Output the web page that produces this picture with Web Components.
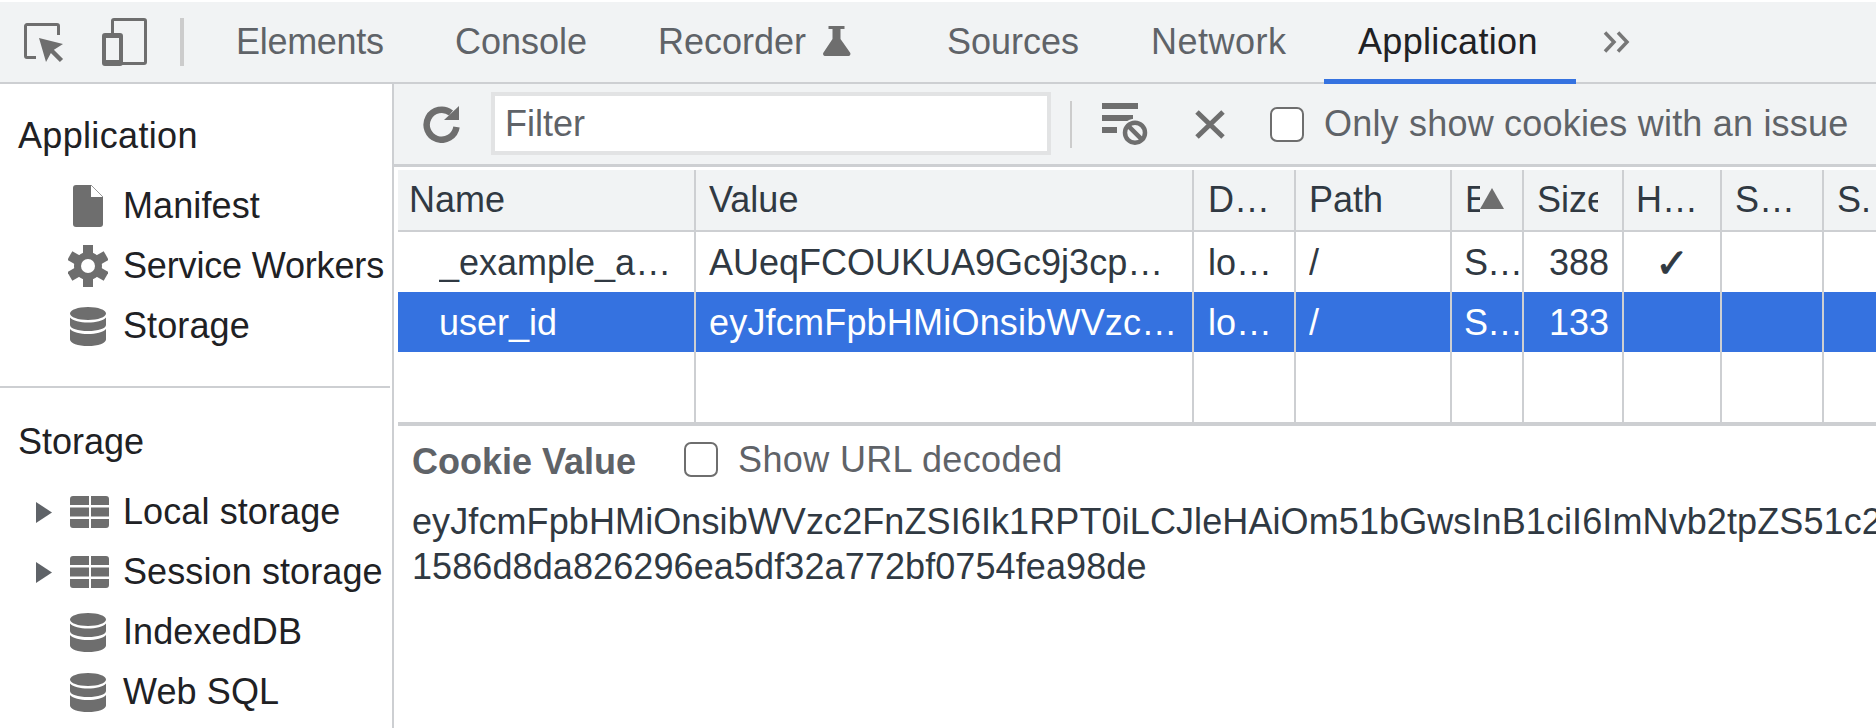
<!DOCTYPE html>
<html lang="en">
<head>
<meta charset="utf-8">
<title>DevTools - Application</title>
<style>
  html, body { margin: 0; height: 100%; background: #fff; overflow: hidden; }
  body { font: 36px "Liberation Sans", Arial, sans-serif; color: #202124; }
</style>
</head>
<body>
<dt-app></dt-app>
<script>
const ICONS = {
  inspect: `<svg width="40" height="40" viewBox="0 0 40 40"><path d="M12 34.500H3A1.500 1.500 0 0 1 1.500 33V3A1.500 1.500 0 0 1 3 1.500h30A1.500 1.500 0 0 1 34.500 3v9" fill="none" stroke="#6e6e6e" stroke-width="3"/><path d="M15 15l24 6-11 7-6 11z" fill="#6e6e6e"/><path d="M27 27l10.500 10.500" stroke="#6e6e6e" stroke-width="4.500"/></svg>`,
  device: `<svg width="45" height="48" viewBox="0 0 45 48"><path d="M10.500 15V3A1.500 1.500 0 0 1 12 1.500h30A1.500 1.500 0 0 1 43.500 3v41a1.500 1.500 0 0 1-1.500 1.500H20" fill="none" stroke="#6e6e6e" stroke-width="3"/><path fill-rule="evenodd" d="M3 15h15a3 3 0 0 1 3 3v27a3 3 0 0 1-3 3H3a3 3 0 0 1-3-3V18a3 3 0 0 1 3-3zM4 20v22h13V20z" fill="#6e6e6e"/></svg>`,
  flask: `<svg width="28" height="30" viewBox="0 0 28 30"><path d="M5.500 0h16v3h-4v10l9.500 13.500a2.200 2.200 0 0 1-2 3.500H2.500a2.200 2.200 0 0 1-2-3.500L9.500 13V3h-4z" fill="#6e6e6e"/></svg>`,
  more: `<svg width="28" height="22" viewBox="0 0 28 22"><path d="M2 1.500L11 11 2 20.500M15 1.500L24 11l-9 9.500" fill="none" stroke="#777" stroke-width="3.500"/></svg>`,
  refresh: `<svg width="38" height="37" viewBox="0 0 38 37"><path d="M33.500 21A15 15 0 1 1 28 7" fill="none" stroke="#6e6e6e" stroke-width="6.500"/><path d="M36 0v14H21z" fill="#6e6e6e"/></svg>`,
  clearFilter: `<svg width="46" height="42" viewBox="0 0 46 42"><rect width="36" height="6" fill="#6e6e6e"/><rect y="12" width="31" height="6" fill="#6e6e6e"/><rect y="24" width="15" height="6" fill="#6e6e6e"/><circle cx="33" cy="29.700" r="14" fill="#f1f3f4"/><circle cx="33" cy="29.700" r="10" fill="none" stroke="#6e6e6e" stroke-width="4.500"/><path d="M26 22.700l14 14" stroke="#6e6e6e" stroke-width="4.500"/></svg>`,
  close: `<svg width="30" height="29" viewBox="0 0 30 29"><path d="M2 2l26 25M28 2L2 27" fill="none" stroke="#6e6e6e" stroke-width="5"/></svg>`,
  file: `<svg width="30" height="42" viewBox="0 0 30 42"><path d="M3 0h15l12 12v27a3 3 0 0 1-3 3H3a3 3 0 0 1-3-3V3a3 3 0 0 1 3-3z" fill="#6e6e6e"/><path d="M18 0l12 12H18z" fill="#fff"/><path d="M18 0l12 12" stroke="#9a9a9a" stroke-width="1"/></svg>`,
  gear: `<svg width="40" height="42" viewBox="0 0 40 42"><g fill="#6e6e6e"><circle cx="20" cy="21" r="14"/><rect x="15" width="10" height="42"/><rect x="15" width="10" height="42" transform="rotate(60 20 21)"/><rect x="15" width="10" height="42" transform="rotate(120 20 21)"/></g><circle cx="20" cy="21" r="7" fill="#fff"/></svg>`,
  db: `<svg width="36" height="39" viewBox="0 0 36 39"><path d="M0 6.500C0 2.900 8 0 18 0s18 2.900 18 6.500-8 6.500-18 6.500S0 10.100 0 6.500z" fill="#6e6e6e"/><path d="M0 10.500C3 14 10 15.500 18 15.500s15-1.500 18-5v7.500c0 3.600-8 6-18 6s-18-2.400-18-6z" fill="#6e6e6e"/><path d="M0 22c3 3.500 10 5 18 5s15-1.500 18-5v10.500c0 3.800-8 6.500-18 6.500s-18-2.700-18-6.500z" fill="#6e6e6e"/></svg>`,
  table: `<svg width="39" height="32" viewBox="0 0 39 32"><path d="M3 0h16v9H0V3a3 3 0 0 1 3-3zM21 0h15a3 3 0 0 1 3 3v6H21zM0 11.500h19v9H0zM21 11.500h18v9H21zM0 23h19v9H3a3 3 0 0 1-3-3zM21 23h18v6a3 3 0 0 1-3 3H21z" fill="#6e6e6e"/></svg>`,
  arrow: `<svg width="16" height="21" viewBox="0 0 16 21"><path d="M0 0l16 10.500L0 21z" fill="#5f6368"/></svg>`,
};

class DtIcon extends HTMLElement {
  connectedCallback() {
    if (this.shadowRoot) return;
    this.attachShadow({ mode: "open" }).innerHTML = `
      <style>:host { display: inline-flex; flex: none; } svg { display: block; }</style>
      ${ICONS[this.getAttribute("name")] || ""}`;
  }
}

class DtCheckbox extends HTMLElement {
  constructor() {
    super();
    this.attachShadow({ mode: "open" }).innerHTML = `
      <style>
        :host { display: inline-flex; align-items: center; gap: var(--gap, 20px); color: #5f6368; white-space: nowrap; }
        .box { width: 30px; height: 31px; border: 2.500px solid #6e6e6e; border-radius: 7px; background: #fff; flex: none; }
      </style>
      <span class="box"></span><slot></slot>`;
  }
}

class DtTab extends HTMLElement {
  constructor() {
    super();
    this.attachShadow({ mode: "open" }).innerHTML = `
      <style>
        :host { display: flex; align-items: center; height: 80px; padding-left: 33px; box-sizing: border-box; flex: none; color: #5f6368; white-space: nowrap; position: relative; }
        :host([active]) { color: #202124; letter-spacing: .33px; padding-left: 34px; }
        :host([active])::after { content: ""; position: absolute; left: 0; right: 0; bottom: -2px; height: 5px; background: #3572e0; }
      </style>
      <slot></slot>`;
  }
}

class DtTabBar extends HTMLElement {
  constructor() {
    super();
    this.attachShadow({ mode: "open" }).innerHTML = `
      <style>
        :host { display: flex; align-items: center; height: 80px; margin-top: 2px; background: #f1f3f4; border-bottom: 2px solid #cdcfd2; padding-left: 24px; }
        .tools { display: flex; align-items: center; padding-right: 19px; }
        .tools dt-icon:first-child { margin: 1px 38px 0 0; }
        .sep { width: 4px; height: 48px; margin-left: 33px; background: #ccc; }
        .tabs { display: flex; align-items: center; }
      </style>
      <div class="tools">
        <dt-icon name="inspect"></dt-icon>
        <dt-icon name="device"></dt-icon>
        <span class="sep"></span>
      </div>
      <div class="tabs"><slot></slot></div>`;
  }
}

class DtTreeItem extends HTMLElement {
  constructor() {
    super();
    this.attachShadow({ mode: "open" }).innerHTML = `
      <style>
        :host { display: flex; align-items: center; height: 60px; white-space: nowrap; letter-spacing: .1px; }
        .arrow { width: 70px; flex: none; display: flex; padding-left: 36px; box-sizing: border-box; }
        .icon { width: 53px; flex: none; display: flex; }
      </style>
      <span class="arrow"><slot name="arrow"></slot></span>
      <span class="icon"><slot name="icon"></slot></span>
      <slot></slot>`;
  }
}

class DtSidebar extends HTMLElement {
  constructor() {
    super();
    this.attachShadow({ mode: "open" }).innerHTML = `
      <style>
        :host { display: block; width: 392px; flex: none; border-right: 2px solid #cdcfd2; overflow: hidden; }
        h2 { font: inherit; margin: 0; padding-left: 18px; height: 60px; line-height: 60px; color: #202124; }
        .one { padding-top: 22px; height: 280px; width: 390px; border-bottom: 2px solid #cdcfd2; }
        .one h2 { margin-bottom: 10px; letter-spacing: .33px; }
        .two { padding-top: 24px; }
        .two h2 { margin-bottom: 10px; }
      </style>
      <div class="one"><h2>Application</h2><slot name="app"></slot></div>
      <div class="two"><h2>Storage</h2><slot name="storage"></slot></div>`;
  }
}

class DtCookieBar extends HTMLElement {
  constructor() {
    super();
    this.attachShadow({ mode: "open" }).innerHTML = `
      <style>
        :host { display: flex; align-items: center; height: 80px; background: #f1f3f4; border-bottom: 3px solid #cdcfd2; padding-left: 29px; color: #5f6368; white-space: nowrap; }
        .filter { width: 542px; height: 55px; margin: 0 0 1px 30px; border: 4px solid #e2e3e4; background: #fff; padding-left: 10px; line-height: 55px; }
        .sep { width: 2px; height: 47px; margin: 0 30px 0 19px; background: #ccc; }
        .x { margin: 0 45px 0 47px; }
        dt-checkbox { letter-spacing: .2px; }
      </style>
      <dt-icon name="refresh"></dt-icon>
      <div class="filter">Filter</div>
      <span class="sep"></span>
      <dt-icon name="clearFilter"></dt-icon>
      <dt-icon class="x" name="close"></dt-icon>
      <dt-checkbox>Only show cookies with an issue</dt-checkbox>`;
  }
}

class DtCookieTable extends HTMLElement {
  constructor() {
    super();
    const head = ["Name", "Value", "D…", "Path", "E", "Size", "H…", "S…", "S."];
    const rows = [
      ["_example_a…", "AUeqFCOUKUA9Gc9j3cp…", "lo…", "/", "S…", "388", "✓", "", ""],
      ["user_id", "eyJfcmFpbHMiOnsibWVzc…", "lo…", "/", "S…", "133", "", "", ""],
    ];
    const cells = (row, cls) => row.map((text, i) => `<div class="cell c${i} ${cls}"><span>${text}</span></div>`).join("");
    this.attachShadow({ mode: "open" }).innerHTML = `
      <style>
        :host { display: block; margin: 3px 0 0 4px; color: #303942; }
        .grid { display: grid; grid-template-columns: 298px 498px 102px 156px 72px 100px 98px 102px 1fr; grid-template-rows: 62px 60px 60px 70px; overflow: hidden; border-bottom: 4px solid #cdcfd2; position: relative; }
        .cell { border-right: 2px solid #cdcfd2; box-sizing: border-box; padding: 0 0 0 13px; white-space: nowrap; min-width: 0; }
        .cell span { display: block; overflow: hidden; line-height: 62px; }
        .cell:nth-child(9n) { border-right: 0; }
        .head { background: #f1f3f4; border-bottom: 2px solid #cdcfd2; }
        .head span { line-height: 60px; }
        .sel { background: #3572e0; color: #fff; }
        .c0.head { padding-left: 11px; }
        .c0.row { padding-left: 41px; }
        .c2 { padding-left: 14px; }
        .c4.row { padding-left: 12px; letter-spacing: -1px; }
        .c4.head { padding-right: 42px; }
        .c5.head { padding-right: 24px; }
        .c5.row { text-align: right; padding-right: 13px; }
        .c6.head { padding-left: 12px; }
        .c6.row { text-align: center; padding-left: 0; font: 40px "DejaVu Sans", sans-serif; -webkit-text-stroke: 1px #303942; }
        .c1.sel { letter-spacing: .2px; }
        .rule { border-right: 2px solid #cdcfd2; }
        .rule:last-of-type { border-right: 0; }
        .sort { position: absolute; left: 1082px; top: 18px; width: 0; height: 0; border-left: 12px solid transparent; border-right: 12px solid transparent; border-bottom: 21px solid #6e6e6e; }
      </style>
      <div class="grid">
        ${cells(head, "head")}
        ${cells(rows[0], "row")}
        ${cells(rows[1], "row sel")}
        ${head.map(() => `<div class="rule"></div>`).join("")}
        <span class="sort"></span>
      </div>`;
  }
}

class DtCookiePreview extends HTMLElement {
  constructor() {
    super();
    this.attachShadow({ mode: "open" }).innerHTML = `
      <style>
        :host { display: block; padding: 16px 0 0 18px; overflow: hidden; color: #303942; }
        .top { display: flex; align-items: center; height: 40px; color: #5f6368; white-space: nowrap; }
        b { margin-right: 48px; }
        dt-checkbox { --gap: 20px; letter-spacing: .35px; margin-top: -5px; }
        .value { margin-top: 17px; line-height: 45px; white-space: nowrap; letter-spacing: .1px; }
      </style>
      <div class="top"><b>Cookie Value</b><dt-checkbox>Show URL decoded</dt-checkbox></div>
      <div class="value">eyJfcmFpbHMiOnsibWVzc2FnZSI6Ik1RPT0iLCJleHAiOm51bGwsInB1ciI6ImNvb2tpZS51c2<br>1586d8da826296ea5df32a772bf0754fea98de</div>`;
  }
}

class DtApp extends HTMLElement {
  constructor() {
    super();
    this.attachShadow({ mode: "open" }).innerHTML = `
      <style>
        :host { display: block; width: 1876px; height: 728px; overflow: hidden; }
        .main { display: flex; height: 644px; }
        .pane { flex: 1; min-width: 0; overflow: hidden; }
        dt-icon[name="flask"] { margin-left: 17px; margin-top: -2px; }
        dt-icon[name="file"] { margin-left: 3px; }
        dt-icon[name="gear"] { margin-left: -2px; }
        .tight { letter-spacing: -.16px; }
      </style>
      <dt-tab-bar>
        <dt-tab style="width:219px;letter-spacing:-.3px">Elements</dt-tab>
        <dt-tab style="width:203px">Console</dt-tab>
        <dt-tab style="width:289px">Recorder<dt-icon name="flask"></dt-icon></dt-tab>
        <dt-tab style="width:204px">Sources</dt-tab>
        <dt-tab style="width:206px;letter-spacing:.5px">Network</dt-tab>
        <dt-tab style="width:252px" active>Application</dt-tab>
        <dt-tab style="padding-left:27px"><dt-icon name="more"></dt-icon></dt-tab>
      </dt-tab-bar>
      <div class="main">
        <dt-sidebar>
          <dt-tree-item slot="app"><dt-icon slot="icon" name="file"></dt-icon>Manifest</dt-tree-item>
          <dt-tree-item slot="app"><dt-icon slot="icon" name="gear"></dt-icon><span class="tight">Service Workers</span></dt-tree-item>
          <dt-tree-item slot="app"><dt-icon slot="icon" name="db"></dt-icon>Storage</dt-tree-item>
          <dt-tree-item slot="storage"><dt-icon slot="arrow" name="arrow"></dt-icon><dt-icon slot="icon" name="table"></dt-icon>Local storage</dt-tree-item>
          <dt-tree-item slot="storage"><dt-icon slot="arrow" name="arrow"></dt-icon><dt-icon slot="icon" name="table"></dt-icon>Session storage</dt-tree-item>
          <dt-tree-item slot="storage"><dt-icon slot="icon" name="db"></dt-icon>IndexedDB</dt-tree-item>
          <dt-tree-item slot="storage"><dt-icon slot="icon" name="db"></dt-icon>Web SQL</dt-tree-item>
        </dt-sidebar>
        <div class="pane">
          <dt-cookie-bar></dt-cookie-bar>
          <dt-cookie-table></dt-cookie-table>
          <dt-cookie-preview></dt-cookie-preview>
        </div>
      </div>`;
  }
}

customElements.define("dt-icon", DtIcon);
customElements.define("dt-checkbox", DtCheckbox);
customElements.define("dt-tab", DtTab);
customElements.define("dt-tab-bar", DtTabBar);
customElements.define("dt-tree-item", DtTreeItem);
customElements.define("dt-sidebar", DtSidebar);
customElements.define("dt-cookie-bar", DtCookieBar);
customElements.define("dt-cookie-table", DtCookieTable);
customElements.define("dt-cookie-preview", DtCookiePreview);
customElements.define("dt-app", DtApp);
</script>
</body>
</html>
